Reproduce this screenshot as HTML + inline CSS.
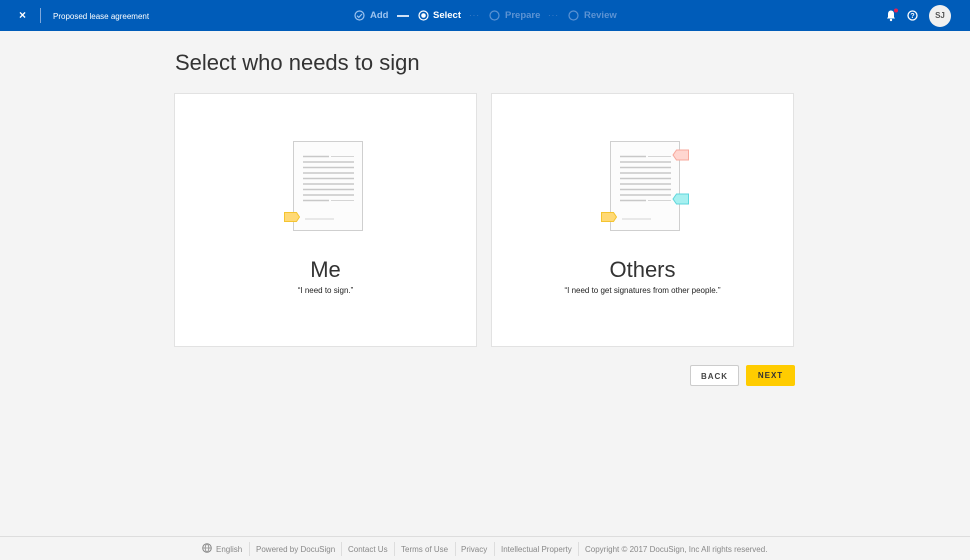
<!DOCTYPE html>
<html><head><meta charset="utf-8"><style>
*{margin:0;padding:0;box-sizing:border-box}
body{width:970px;height:560px;background:#f4f4f4;font-family:"Liberation Sans",sans-serif;position:relative;overflow:hidden;color:#333}
.hdr{position:absolute;left:0;top:0;width:970px;height:31px;background:#005cb9;color:#fff}
.a{position:absolute}
.card{position:absolute;top:93px;width:303px;height:254px;background:#fff;border:1px solid #e2e2e2}
.card h2{position:absolute;width:100%;top:163px;text-align:center;font-weight:normal;font-size:22px;color:#333}
.card p{position:absolute;width:100%;top:192px;text-align:center;font-size:8px;color:#222}
.btn{position:absolute;top:365px;height:21px;font-size:8px;font-weight:bold;letter-spacing:1px;text-align:center;line-height:21px;border-radius:2px}
.ft{position:absolute;left:0;top:536px;width:970px;height:24px;border-top:1px solid #ddd;background:#f4f4f4;font-size:8px;color:#888}
.ft span{position:absolute;top:8px}
.sep{position:absolute;top:5px;width:1px;height:14px;background:#ddd}
</style></head><body>
<div class="hdr">
<div class="a" style="left:19px;top:8px;font-size:12px;font-weight:bold">×</div>
<div class="a" style="left:40px;top:8px;width:1px;height:15px;background:#7fa8dc"></div>
<div class="a" style="left:53px;top:12px;font-size:8px">Proposed lease agreement</div>
<svg class="a" style="left:354px;top:10px" width="11" height="11"><circle cx="5.5" cy="5.5" r="4.5" fill="none" stroke="#9cc3ef" stroke-width="1.2"/><path d="M3 5.7l1.8 1.7 3.2-3.4" fill="none" stroke="#9cc3ef" stroke-width="1.2"/></svg>
<div class="a" style="left:370px;top:10px;font-size:9.5px;font-weight:bold;color:#9cc3ef">Add</div>
<div class="a" style="left:397px;top:15px;width:12px;height:1.5px;background:#cfe0f5"></div>
<svg class="a" style="left:418px;top:10px" width="11" height="11"><circle cx="5.5" cy="5.5" r="4.5" fill="none" stroke="#fff" stroke-width="1.2"/><circle cx="5.5" cy="5.5" r="2.3" fill="#fff"/></svg>
<div class="a" style="left:433px;top:10px;font-size:9.5px;font-weight:bold">Select</div>
<div class="a" style="left:469px;top:11px;font-size:8px;color:#4a84c9;letter-spacing:1px">···</div>
<svg class="a" style="left:489px;top:10px" width="11" height="11"><circle cx="5.5" cy="5.5" r="4.5" fill="none" stroke="#5c93d3" stroke-width="1.2"/></svg>
<div class="a" style="left:505px;top:10px;font-size:9.5px;font-weight:bold;color:#5c93d3">Prepare</div>
<div class="a" style="left:548px;top:11px;font-size:8px;color:#4a84c9;letter-spacing:1px">···</div>
<svg class="a" style="left:568px;top:10px" width="11" height="11"><circle cx="5.5" cy="5.5" r="4.5" fill="none" stroke="#5c93d3" stroke-width="1.2"/></svg>
<div class="a" style="left:584px;top:10px;font-size:9.5px;font-weight:bold;color:#5c93d3">Review</div>
<svg class="a" style="left:885px;top:8px" width="14" height="14"><path d="M6 2.5c-2 0-3 1.5-3 3.5v3l-1 1.5h8l-1-1.5v-3c0-2-1-3.5-3-3.5z" fill="#fff"/><circle cx="6" cy="12" r="1.2" fill="#fff"/><circle cx="11" cy="2.5" r="2" fill="#e8204f"/></svg>
<svg class="a" style="left:907px;top:10px" width="11" height="11"><circle cx="5.5" cy="5.5" r="4.5" fill="none" stroke="#fff" stroke-width="1.3"/><text x="5.5" y="8" text-anchor="middle" font-size="7" font-weight="bold" fill="#fff" font-family="Liberation Sans">?</text></svg>
<div class="a" style="left:929px;top:5px;width:22px;height:22px;border-radius:50%;background:#f0f0f0;color:#555;font-size:8px;font-weight:bold;text-align:center;line-height:22px">SJ</div>
</div>
<div class="a" style="left:175px;top:50px;font-size:22px;color:#333">Select who needs to sign</div>

<div class="card" style="left:174px">
<svg class="a" style="left:107px;top:46px" width="90" height="95">
<g transform="translate(11,1)">
<rect x="0.5" y="0.5" width="69" height="89" fill="#fcfcfc" stroke="#cfcfcf"/>
<g stroke="#c8c8c8" stroke-width="1.6"><path d="M10 15.5h26M10 21h51M10 26.5h51M10 32h51M10 37.5h51M10 43h51M10 48.5h51M10 54h51M10 59.5h26"/></g>
<g stroke="#c8c8c8" stroke-width="0.8"><path d="M38 15.5h23M38 59.5h23M12 78h29"/></g>
</g>
<path d="M2.5 72.5h12l3 4.5-3 4.5h-12z" fill="#ffd975" stroke="#f4c430"/>
</svg>
<h2>Me</h2><p>“I need to sign.”</p>
</div>

<div class="card" style="left:491px">
<svg class="a" style="left:107px;top:46px" width="100" height="95">
<g transform="translate(11,1)">
<rect x="0.5" y="0.5" width="69" height="89" fill="#fcfcfc" stroke="#cfcfcf"/>
<g stroke="#c8c8c8" stroke-width="1.6"><path d="M10 15.5h26M10 21h51M10 26.5h51M10 32h51M10 37.5h51M10 43h51M10 48.5h51M10 54h51M10 59.5h26"/></g>
<g stroke="#c8c8c8" stroke-width="0.8"><path d="M38 15.5h23M38 59.5h23M12 78h29"/></g>
<path d="M78.5 9h-12l-3.5 5 3.5 5h12z" fill="#ffd6d0" stroke="#f7a89c"/>
<path d="M78.5 53h-12l-3.5 5 3.5 5h12z" fill="#a6f0f0" stroke="#5fd6dc"/>
</g>
<path d="M2.5 72.5h12l3 4.5-3 4.5h-12z" fill="#ffd975" stroke="#f4c430"/>
</svg>
<h2>Others</h2><p>“I need to get signatures from other people.”</p>
</div>

<div class="btn" style="left:690px;width:49px;border:1px solid #ccc;background:#fff;color:#444">BACK</div>
<div class="btn" style="left:746px;width:49px;background:#ffcc00;color:#333">NEXT</div>

<div class="ft">
<svg class="a" style="left:202px;top:6px" width="10" height="10"><circle cx="5" cy="5" r="4.3" fill="none" stroke="#888"/><path d="M0.7 5h8.6M5 0.7c-2.5 2.5-2.5 6 0 8.6M5 0.7c2.5 2.5 2.5 6 0 8.6" fill="none" stroke="#888" stroke-width="0.8"/></svg>
<span style="left:216px">English</span><div class="sep" style="left:249px"></div>
<span style="left:256px">Powered by DocuSign</span><div class="sep" style="left:341px"></div>
<span style="left:348px">Contact Us</span><div class="sep" style="left:394px"></div>
<span style="left:401px">Terms of Use</span><div class="sep" style="left:455px"></div>
<span style="left:461px">Privacy</span><div class="sep" style="left:494px"></div>
<span style="left:501px">Intellectual Property</span><div class="sep" style="left:578px"></div>
<span style="left:585px">Copyright © 2017 DocuSign, Inc All rights reserved.</span>
</div>
</body></html>
